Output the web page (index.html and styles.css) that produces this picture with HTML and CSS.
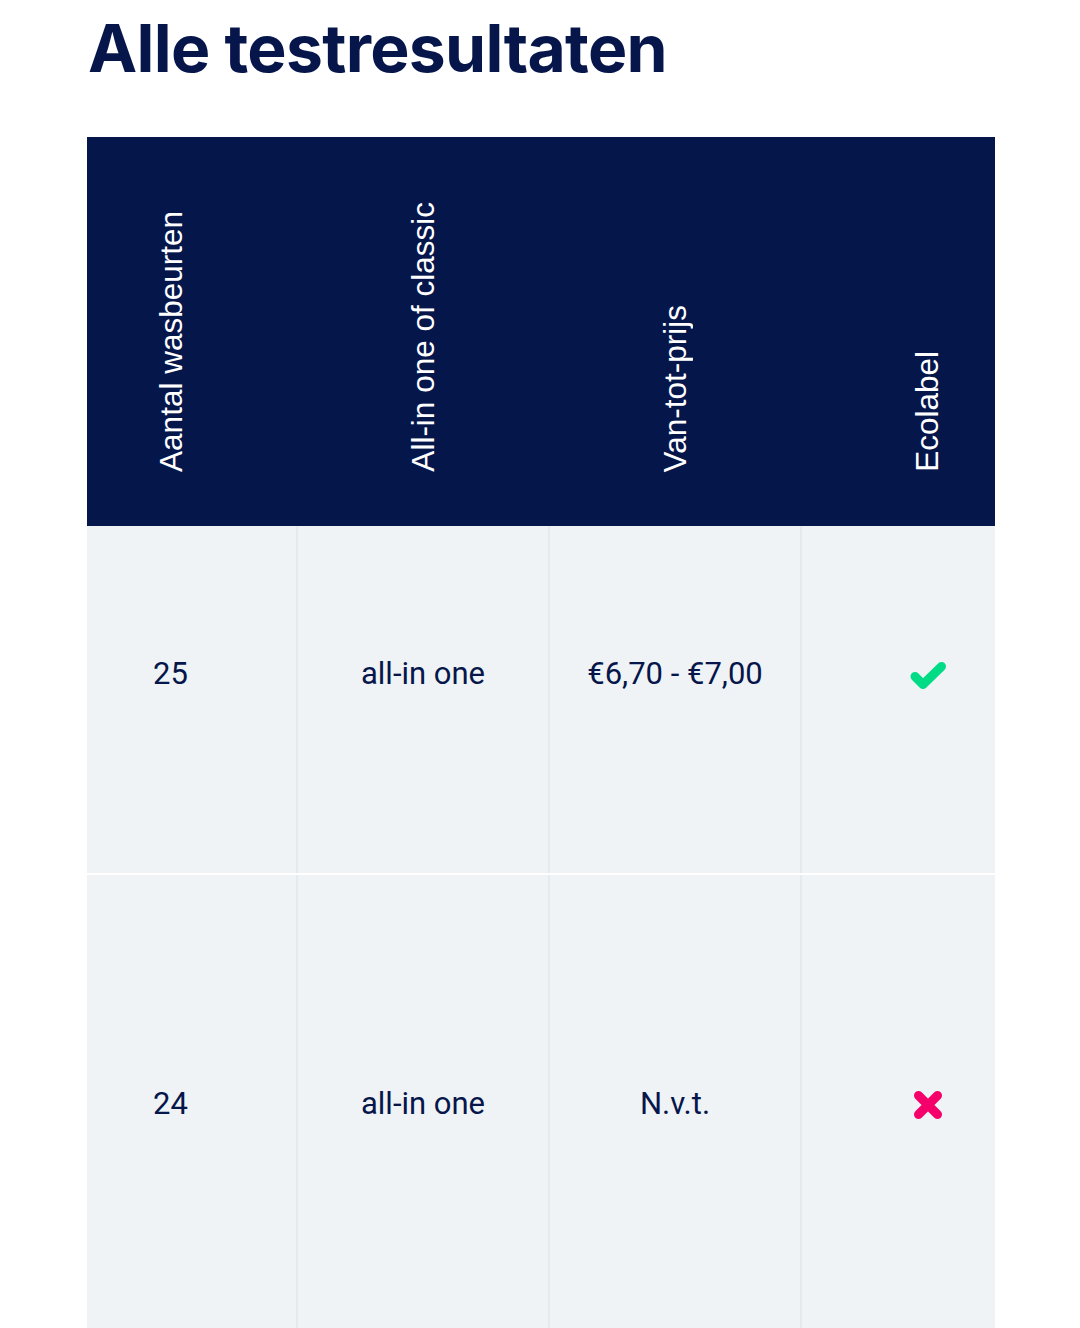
FILE: index.html
```html
<!DOCTYPE html>
<html lang="nl">
<head>
<meta charset="utf-8">
<title>Alle testresultaten</title>
<link rel="stylesheet" href="styles.css">
</head>
<body>
<main class="page">
  <h1 class="title">Alle testresultaten</h1>
  <div class="table-wrap">
    <table class="results">
      <thead>
        <tr>
          <th><span class="vtext">Aantal wasbeurten</span></th>
          <th><span class="vtext">All-in one of classic</span></th>
          <th><span class="vtext">Van-tot-prijs</span></th>
          <th><span class="vtext">Ecolabel</span></th>
        </tr>
      </thead>
      <tbody>
        <tr class="row1">
          <td>25</td>
          <td>all-in one</td>
          <td>€6,70 - €7,00</td>
          <td>
            <svg class="icon" width="46" height="40" viewBox="0 0 46 40" aria-label="ja">
              <path d="M10 22.5 L18 30.5 L36.5 12.5" fill="none" stroke="#00dc86" stroke-width="9" stroke-linecap="round" stroke-linejoin="round"/>
            </svg>
          </td>
        </tr>
        <tr class="row2">
          <td>24</td>
          <td>all-in one</td>
          <td>N.v.t.</td>
          <td>
            <svg class="icon" width="46" height="40" viewBox="0 0 46 40" aria-label="nee">
              <path d="M13.5 11.5 L32.5 30.5 M32.5 11.5 L13.5 30.5" fill="none" stroke="#f5006a" stroke-width="9" stroke-linecap="round"/>
            </svg>
          </td>
        </tr>
      </tbody>
    </table>
  </div>
</main>
</body>
</html>
```
FILE: styles.css
```css
html, body {
  margin: 0;
  padding: 0;
  background: #ffffff;
}

.page {
  padding-left: 87px;
}

.title {
  margin: 0;
  padding-top: 12px;
  padding-left: 1px;
  height: 137px;
  box-sizing: border-box;
  font-family: "Inter", "Liberation Sans", sans-serif;
  font-weight: 700;
  font-size: 66px;
  letter-spacing: -0.7px;
  line-height: 72px;
  color: #06164a;
}

.table-wrap {
  width: 908px;
  overflow: hidden;
}

.results {
  margin-left: -42px;
  width: 1008px;
  table-layout: fixed;
  border-collapse: collapse;
  border-spacing: 0;
}

.results th {
  width: 252px;
  height: 389px;
  padding: 0 0 50px 0;
  box-sizing: border-box;
  background: #05164a;
  vertical-align: bottom;
  text-align: center;
}

.vtext {
  display: inline-block;
  writing-mode: vertical-rl;
  transform: rotate(180deg);
  font-family: "Liberation Sans", Arial, sans-serif;
  font-weight: 400;
  font-size: 31.5px;
  line-height: 31px;
  color: #ffffff;
  white-space: nowrap;
}

.results td {
  background: #eff3f6;
  text-align: center;
  vertical-align: middle;
  font-family: Roboto, "Liberation Sans", sans-serif;
  font-size: 31px;
  color: #06164a;
  border-right: 2px solid #e5eaef;
  padding: 0 0 52px 0;
  box-sizing: border-box;
}

.results td:last-child {
  border-right: none;
}

.row1 td {
  height: 348px;
  border-bottom: 2px solid #ffffff;
}

.row2 td {
  height: 510px;
}

.icon {
  display: block;
  margin: 0 auto;
}
```
